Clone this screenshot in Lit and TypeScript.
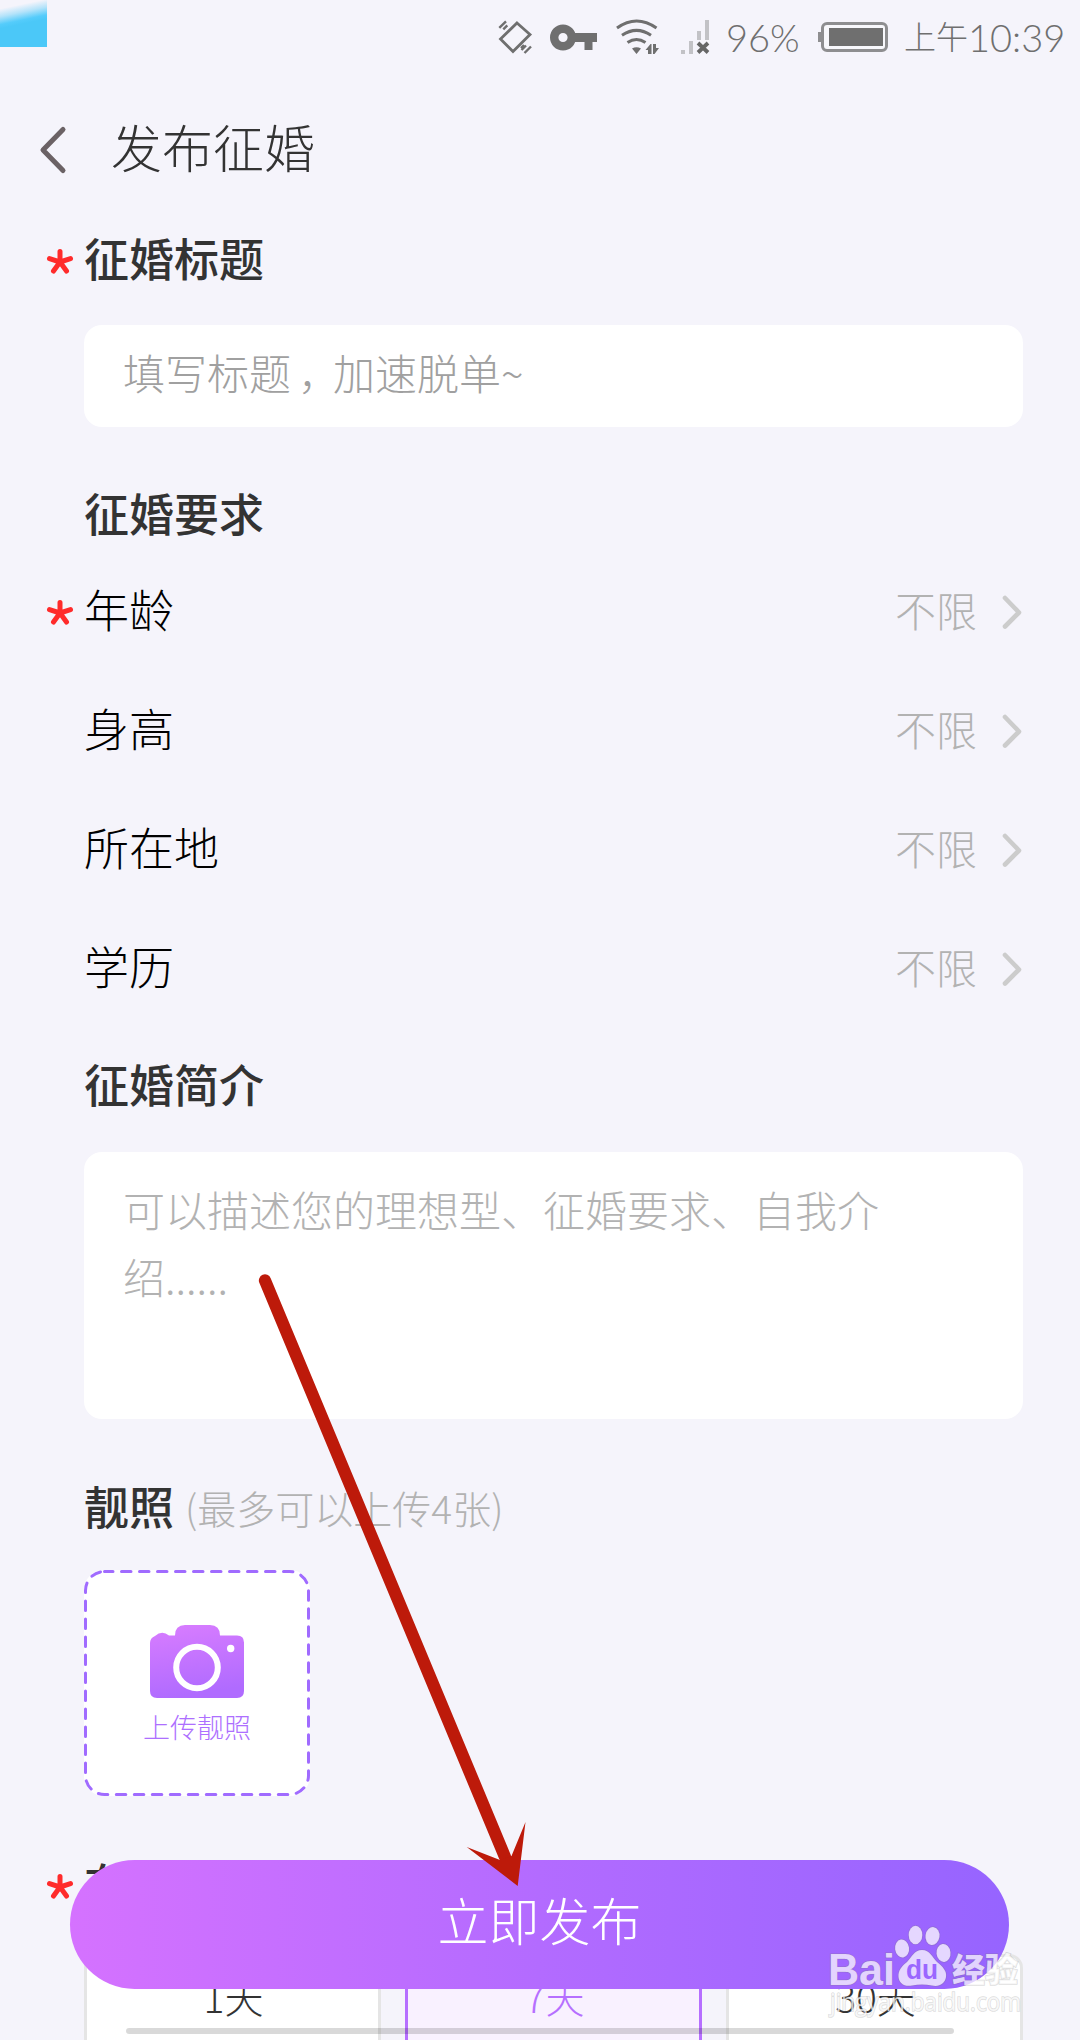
import { LitElement, html, css, svg } from "lit";
import { customElement, property } from "lit/decorators.js";

const star = html`<svg class="star" width="28" height="28" viewBox="0 0 28 28">
  <path d="M14 3.5V14M3.5 10.6L14 14L24.500 10.6M7.500 23L14 14L20.500 23" />
</svg>`;

@customElement("section-title")
class SectionTitle extends LitElement {
  @property({ type: Boolean }) required = false;
  @property() hint = "";
  @property() label = "";

  static styles = css`
    :host { display: flex; align-items: center; height: 76px; padding-left: 46px; }
    .mark { width: 28px; height: 28px; margin: 6px 10px 0 0; }
    .star { display: block; fill: none; stroke: #ff2b2b; stroke-width: 5; stroke-linecap: round; }
    .text { font-size: 45px; line-height: 70px; font-weight: 500; color: #333; padding-bottom: 3px; white-space: nowrap; }
    .hint { font-size: 39px; line-height: 70px; font-weight: 300; color: #b2b2b2; padding: 0 0 1px 11px; }
  `;

  render() {
    return html`<div class="mark">${this.required ? star : ""}</div>
      <div class="text">${this.label}</div>
      ${this.hint ? html`<div class="hint">${this.hint}</div>` : ""}`;
  }
}

@customElement("option-row")
class OptionRow extends LitElement {
  @property({ type: Boolean }) required = false;
  @property() label = "";
  @property() value = "";

  static styles = css`
    :host { display: flex; align-items: center; height: 119px; padding: 0 57px 0 46px; }
    .mark { width: 28px; height: 28px; margin: 3px 10px 0 0; }
    .star { display: block; fill: none; stroke: #ff2b2b; stroke-width: 5; stroke-linecap: round; }
    .label { flex: 1; font-size: 45px; line-height: 70px; color: #000; padding-bottom: 6px; }
    .value { font-size: 41px; line-height: 70px; color: #b2b2b2; padding-bottom: 6px; }
    .chev { display: block; margin-left: 24px; fill: none; stroke: #ccc; stroke-width: 4.6; stroke-linecap: round; stroke-linejoin: round; }
  `;

  render() {
    return html`<div class="mark">${this.required ? star : ""}</div>
      <div class="label">${this.label}</div>
      <div class="value">${this.value}</div>
      <svg class="chev" width="22" height="36" viewBox="0 0 22 36"><path d="M4 4L18 18.500L4 32.500" /></svg>`;
  }
}

@customElement("app-root")
class AppRoot extends LitElement {
  static styles = css`
    :host {
      display: block;
      font-family: "Noto Sans CJK SC", sans-serif;
      font-weight: 300;
    }
    .screen { position: relative; width: 1080px; height: 2040px; overflow: hidden; background: #f5f4fb; display: flex; flex-direction: column; }
    .screen > * { flex-shrink: 0; }
    .corner { position: absolute; left: 0; top: 0; }
    .status { height: 75px; display: flex; align-items: flex-start; padding-left: 496px; color: #6f6f6f; }
    .status svg { display: block; }
    .pct, .clock-digits { font-family: Lato, "Noto Sans CJK SC", sans-serif; font-weight: 300; font-size: 38px; line-height: 74px; white-space: nowrap; }
    .pct { width: 92px; padding-left: 13px; box-sizing: border-box; }
    .clock { display: flex; padding-left: 14px; }
    .clock-zh { font-size: 32px; line-height: 71px; width: 64px; white-space: nowrap; }
    .nav { height: 146px; display: flex; align-items: center; padding-left: 38px; }
    .back { display: block; margin-top: 4px; fill: none; stroke: #6b6265; stroke-width: 5; stroke-linecap: round; stroke-linejoin: round; }
    .title { font-size: 51px; line-height: 80px; color: #333; margin-left: 43px; padding-bottom: 4px; }
    .card { margin: 0 57px 0 84px; background: #fff; border-radius: 18px; padding: 0 41px 0 39px; box-sizing: border-box; }
    .input { margin-top: 28px; height: 102px; font-size: 42px; line-height: 93px; color: #a0a0a0; }
    .comma { padding-left: 7px; margin-right: -7px; }
    .area { margin-top: 29px; height: 267px; padding-top: 23px; font-size: 42px; line-height: 67px; color: #b2b2b2; }
    .gap-a { margin-top: 49px; }
    .gap-b { margin-top: 19px; }
    .gap-c { margin-top: 50px; }
    .upload { width: 226px; height: 226px; margin: 25px 0 0 84px; display: grid; }
    .upload > * { grid-area: 1 / 1; }
    .upload-label { font-size: 27px; line-height: 40px; color: #ad6fff; text-align: center; padding-top: 137px; }
    .plans { display: flex; gap: 24px; margin: 32px 0 0 84px; }
    .plan { width: 297px; height: 110px; box-sizing: border-box; border: 3px solid #e5e5e5; border-radius: 14px; background: #fff; color: #333; font-size: 39px; line-height: 79px; text-align: center; padding-left: 2px; }
    .plan.on { border-color: #b66fff; background: #f9f1ff; color: #b66fff; }
    .scroll { position: absolute; left: 126px; top: 2028px; width: 828px; height: 6px; border-radius: 3px; background: rgba(0, 0, 0, 0.15); }
    .submit { position: absolute; left: 70px; top: 1860px; width: 939px; height: 129px; border-radius: 65px; background: linear-gradient(90deg, #d572ff, #b36bff 50%, #9664ff); color: #fff; font-size: 51px; line-height: 119px; text-align: center; }
    .overlay { position: absolute; left: 0; top: 0; pointer-events: none; }
    .wm-bold { font-family: "Liberation Sans", sans-serif; font-weight: 700; }
    .wm-zh { font-family: "Noto Sans CJK SC", sans-serif; font-weight: 900; }
    .wm-url { font-family: "Open Sans", sans-serif; font-weight: 400; }
  `;

  private statusIcons() {
    return html`<svg width="217" height="75" viewBox="496 0 217 75" fill="none">
      <path d="M517 23L530 34.500L513 51.500L500.500 39Z" stroke="#6f6f6f" stroke-width="2.800" />
      <path d="M499.300 27.800L506 21.300M503.300 29.300L507.300 25.300M524.500 53L531 46.500M521.500 50L526 45.500M521 48L524 45" stroke="#6f6f6f" stroke-width="2.400" />
      <circle cx="563" cy="37.500" r="8.800" stroke="#6f6f6f" stroke-width="8.400" />
      <path d="M574 33H597V42H592.500V50H584.500V42H574Z" fill="#6f6f6f" />
      <path d="M617 28Q636.500 14 656.500 28M622 35.300Q636.500 25.500 651 35.300M627.500 42.500Q636.500 36.500 645.500 42.500" stroke="#6f6f6f" stroke-width="3" />
      <path d="M632 48.500Q636.500 46 641 48.500L636.500 54ZM645.500 50L650.500 44H651.500V54H648V50ZM653 44H656V48H659L654.500 54H653Z" fill="#6f6f6f" />
      <path d="M681 50h4v4h-4zM689 41h4v13h-4zM697 31h4v9h-4zM705 20h4v20h-4z" fill="#c2c2c6" />
      <path d="M698 43L708 52.500M708 43L698 52.500" stroke="#666" stroke-width="3.800" />
    </svg>`;
  }

  private battery() {
    return html`<svg width="85" height="75" viewBox="805 0 85 75">
      <rect x="822.500" y="23.500" width="64" height="27" rx="4.500" fill="#f8f8fc" stroke="#8e8e90" stroke-width="3" />
      <rect x="829" y="28" width="54" height="18" fill="#6f6f6f" />
      <rect x="818" y="32" width="4" height="10" fill="#8e8e90" />
    </svg>`;
  }

  private watermark() {
    const marks = svg`
      <text class="wm-bold" x="828" y="1985" font-size="45" textLength="67" lengthAdjust="spacingAndGlyphs">Bai</text>
      <ellipse cx="902" cy="1948.500" rx="7" ry="9" transform="rotate(-8 902 1948)" />
      <ellipse cx="915.500" cy="1935" rx="6.800" ry="9.300" />
      <ellipse cx="932.500" cy="1936" rx="7" ry="9" transform="rotate(8 932 1936)" />
      <ellipse cx="943.500" cy="1953" rx="7" ry="9" transform="rotate(-6 943 1953)" />
      <path d="M922 1950C930 1950 932 1957 937 1962C943 1967 947 1971 946 1977C945 1984 939 1987 932 1985.500C925 1984 919 1984 912 1985.500C904 1987 899 1983 898.500 1977C898 1970 902 1966 907 1962C912 1957 914 1950 922 1950Z" />
      <text class="wm-zh" x="952" y="1982" font-size="33" textLength="66">经验</text>
      <text class="wm-url" x="830" y="2011" font-size="25" textLength="191" lengthAdjust="spacingAndGlyphs">jingyan.baidu.com</text>`;
    return svg`<g fill="#fff" fill-opacity="0.74" stroke="#777" stroke-opacity="0.25" stroke-width="1.600" paint-order="stroke">${marks}</g>
      <text class="wm-bold" x="906" y="1979" font-size="28" textLength="32" lengthAdjust="spacingAndGlyphs" fill="#9b67ff">du</text>`;
  }

  render() {
    return html`<div class="screen">
      <svg class="corner" width="47" height="47" viewBox="0 0 47 47">
        <defs><linearGradient id="sky" x1="18" y1="5" x2="22" y2="24" gradientUnits="userSpaceOnUse">
          <stop offset="0" stop-color="#f5f4fb" /><stop offset="0.400" stop-color="#b4e3fa" /><stop offset="0.800" stop-color="#55ccfb" /><stop offset="1" stop-color="#4bc8f8" />
        </linearGradient></defs>
        <rect width="47" height="47" fill="url(#sky)" />
      </svg>
      <div class="status">
        ${this.statusIcons()}
        <div class="pct">96%</div>
        ${this.battery()}
        <div class="clock"><div class="clock-zh">上午</div><div class="clock-digits">10:39</div></div>
      </div>
      <div class="nav">
        <svg class="back" width="30" height="50" viewBox="38 125 30 50"><path d="M63 129.500L43 150L63 170.500" /></svg>
        <div class="title">发布征婚</div>
      </div>
      <section-title required label="征婚标题"></section-title>
      <div class="card input">填写标题<span class="comma">，</span>加速脱单~</div>
      <section-title class="gap-a" label="征婚要求"></section-title>
      <option-row required label="年龄" value="不限"></option-row>
      <option-row label="身高" value="不限"></option-row>
      <option-row label="所在地" value="不限"></option-row>
      <option-row label="学历" value="不限"></option-row>
      <section-title class="gap-b" label="征婚简介"></section-title>
      <div class="card area">可以描述您的理想型、征婚要求、自我介绍......</div>
      <section-title class="gap-c" label="靓照" hint="(最多可以上传4张)"></section-title>
      <div class="upload">
        <svg width="226" height="226" viewBox="0 0 226 226">
          <defs><linearGradient id="cam" x1="0" y1="0" x2="0.200" y2="1">
            <stop offset="0" stop-color="#d97dff" /><stop offset="1" stop-color="#b06bff" />
          </linearGradient></defs>
          <rect width="226" height="226" rx="20" fill="#fff" />
          <rect x="1.500" y="1.500" width="223" height="223" rx="19" fill="none" stroke="#a06bff" stroke-width="3" stroke-dasharray="9.500 8.500" stroke-dashoffset="1" stroke-linecap="round" />
          <path d="M66 73Q66 68 71 66Q78 60 85 65.500H91Q91 55 101 55H126Q136 55 136 65.500H153Q160 65.500 160 72.500V121Q160 128 153 128H73Q66 128 66 121Z" fill="url(#cam)" />
          <circle cx="113" cy="97.500" r="20.800" fill="none" stroke="#fff" stroke-width="6" />
          <circle cx="146.700" cy="78.500" r="3.700" fill="#fff" />
        </svg>
        <div class="upload-label">上传靓照</div>
      </div>
      <section-title class="gap-c" required label="在"></section-title>
      <div class="plans">
        <div class="plan">1天</div>
        <div class="plan on">7天</div>
        <div class="plan">30天</div>
      </div>
      <div class="scroll"></div>
      <div class="submit">立即发布</div>
      <svg class="overlay" width="1080" height="2040" viewBox="0 0 1080 2040">
        ${this.watermark()}
        <path d="M265 1280.500L505 1857" stroke="#bd1a0a" stroke-width="12.300" stroke-linecap="round" />
        <path d="M517.700 1886L466.700 1847L500 1860L511.500 1856L525.500 1822Z" fill="#bd1a0a" />
      </svg>
    </div>`;
  }
}
